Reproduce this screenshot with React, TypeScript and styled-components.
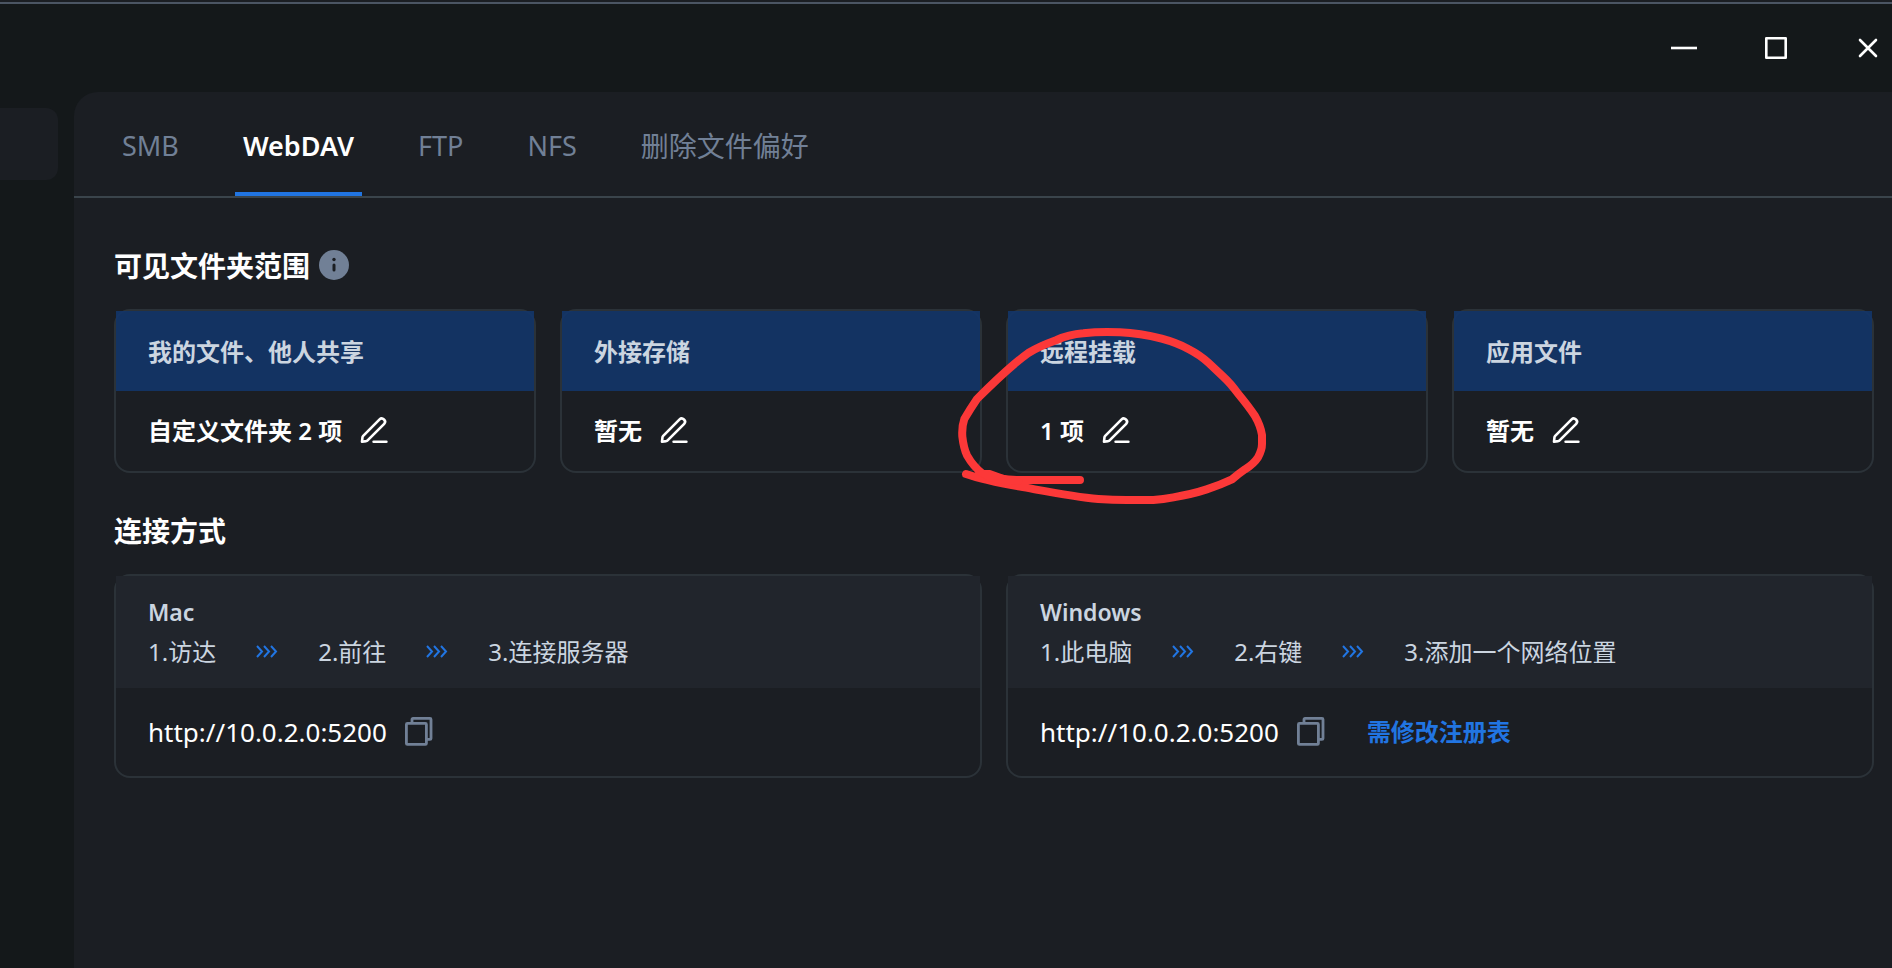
import React from 'react';
import styled, { createGlobalStyle } from 'styled-components';

const GlobalStyle = createGlobalStyle`
  *, *::before, *::after { box-sizing: border-box; }
  html, body, #root { height: 100%; }
  body {
    margin: 0;
    background: #14181a;
    color: #ffffff;
    font-family: "Noto Sans", "Noto Sans CJK SC", sans-serif;
    font-size: 24px;
    line-height: 40px;
  }
  h2, h3, p, ol, ul { margin: 0; padding: 0; list-style: none; }
  button { border: 0; padding: 0; background: none; color: inherit; font: inherit; cursor: pointer; }
  svg { display: block; }
`;

const Window = styled.div`
  display: flex;
  flex-direction: column;
  min-height: 100%;
  border-top: 2px solid #1b1e23;
`;

const TitleBar = styled.header`
  display: flex;
  justify-content: flex-end;
  align-items: center;
  gap: 60px;
  height: 90px;
  padding: 0 8px 0 0;
  border-top: 2px solid #4b5563;
`;

const WindowButton = styled.button`
  width: 32px;
  height: 32px;
`;

const Body = styled.div`
  display: flex;
  flex: 1;
`;

const Sidebar = styled.nav`
  flex: none;
  width: 74px;
  padding: 16px 16px 0 0;
`;

const SidebarItem = styled.div`
  height: 72px;
  border-radius: 0 12px 12px 0;
  background: #1b1e23;
`;

const Panel = styled.main`
  flex: 1;
  min-width: 0;
  border-top-left-radius: 24px;
  background: #1b1e23;
`;

const Tabs = styled.div`
  display: flex;
  gap: 48px;
  height: 106px;
  padding-left: 40px;
  border-bottom: 2px solid #3a444b;
`;

const Tab = styled.button<{ $active?: boolean; $latin?: boolean }>`
  padding: 8px 8px 0;
  border-bottom: 4px solid ${(p) => (p.$active ? '#2175e2' : 'transparent')};
  color: ${(p) => (p.$active ? '#ffffff' : '#718096')};
  font-size: ${(p) => (p.$latin ? 27 : 28)}px;
  font-weight: ${(p) => (p.$active ? 600 : 400)};
  white-space: nowrap;
`;

const Content = styled.div`
  padding: 48px 18px 40px 40px;
`;

const Section = styled.section`
  margin-bottom: 38px;
`;

const SectionTitle = styled.h2`
  display: flex;
  align-items: center;
  gap: 8px;
  margin-bottom: 23px;
  font-size: 28px;
  font-weight: 700;
`;

const CardGrid = styled.div<{ $columns: number }>`
  display: grid;
  grid-template-columns: repeat(${(p) => p.$columns}, minmax(0, 1fr));
  gap: 24px;
`;

const Card = styled.article`
  position: relative;
  border: 2px solid #2b3238;
  border-radius: 16px;
`;

const ScopeHeader = styled.h3`
  padding: 21px 32px 19px;
  background: rgba(19, 53, 105, 0.9);
  color: #cbd5e0;
  font-size: 24px;
  font-weight: 700;
`;

const ScopeBody = styled.div`
  display: flex;
  align-items: center;
  gap: 16px;
  padding: 20px 32px;
  font-weight: 600;
`;

const GuideHeader = styled.div`
  padding: 16px 32px;
  background: #21252c;
  color: #cbd5e0;
`;

const GuideTitle = styled.h3`
  font-size: 23px;
  font-weight: 600;
`;

const Steps = styled.ol`
  display: flex;
  align-items: center;
  gap: 39px;
`;

const Step = styled.li`
  display: flex;
  align-items: center;
  gap: 39px;
  white-space: nowrap;
`;

const GuideBody = styled.div`
  display: flex;
  align-items: center;
  gap: 16px;
  padding: 24px 32px;
`;

const Address = styled.span`
  font-size: 26px;
`;

const IconButton = styled.button`
  flex: none;
  width: 32px;
  height: 32px;
`;

const RegistryLink = styled.a`
  margin-left: 24px;
  color: #2175e2;
  font-weight: 700;
  text-decoration: none;
`;

const Marker = styled.svg`
  position: absolute;
  z-index: 1;
  top: -21px;
  left: -68px;
  width: 480px;
  height: 230px;
  pointer-events: none;
`;

const EditIcon = () => (
  <svg width="32" height="32" viewBox="0 0 32 32" fill="none" stroke="#fff" strokeWidth="2.6" strokeLinecap="round" strokeLinejoin="round">
    <path d="M4 26.7L4.5 22.2Q4.6 21.4 5.2 20.8L21.6 4.4C24.4 1.6 28.9 6 26.2 8.8L9.6 25.3Q9 25.9 8.2 26.1Z" />
    <path d="M15.6 26.8H28.4" />
  </svg>
);

const CopyIcon = () => (
  <svg width="32" height="32" viewBox="0 0 32 32" fill="none" stroke="#718096" strokeWidth="2.8" strokeLinejoin="round">
    <rect x="3.4" y="7.4" width="20" height="21" rx="1" />
    <path d="M9 7V3.4Q9 2.4 10 2.4H27Q28 2.4 28 3.4V22.4Q28 23.4 27 23.4H24" />
  </svg>
);

const InfoIcon = () => (
  <svg width="32" height="32" viewBox="0 0 32 32" role="img" aria-label="info">
    <circle cx="16" cy="15" r="15" fill="#718096" />
    <circle cx="16" cy="9.5" r="1.7" fill="#1b1e23" />
    <path d="M16 15V20" stroke="#1b1e23" strokeWidth="3" strokeLinecap="round" />
  </svg>
);

const Chevrons = () => (
  <svg width="24" height="16" viewBox="0 0 24 16" fill="none" stroke="#2175e2" strokeWidth="2" aria-hidden="true">
    <path d="M2 2L7 7.5L2 13M9 2L14 7.5L9 13M16 2L21 7.5L16 13" />
  </svg>
);

const HandCircle = () => (
  <Marker viewBox="0 0 1440 690" fill="none" stroke="#fc3838" strokeWidth="24" strokeLinecap="round" strokeLinejoin="round" aria-hidden="true">
    <path d="M78 552C110 563 150 574 240 590S400 620 475 627Q530 631 580 630H640Q670 628 700 622C740 615 770 608 800 598Q840 585 876 568Q895 552 915 538Q942 521 954 502Q966 480 966 462V435Q962 408 945 378Q925 348 895 312Q872 280 850 260L805 218Q780 195 745 177Q710 158 665 146Q600 129 540 127Q480 124 430 130Q385 134 350 150Q295 170 265 189C230 214 160 278 111 327Q90 358 73 387Q65 410 67 440Q71 475 81 496Q100 530 130 553Q180 570 230 570H420" />
    <path d="M118 548L150 548L200 566L240 575L200 577L150 566Z" fill="#fc3838" strokeWidth="16" />
  </Marker>
);

const tabs = [
  { name: 'SMB', latin: true },
  { name: 'WebDAV', latin: true },
  { name: 'FTP', latin: true },
  { name: 'NFS', latin: true },
  { name: '删除文件偏好', latin: false },
];

const scopes = [
  { title: '我的文件、他人共享', value: '自定义文件夹 2 项' },
  { title: '外接存储', value: '暂无' },
  { title: '远程挂载', value: '1 项', marked: true },
  { title: '应用文件', value: '暂无' },
];

const guides = [
  { system: 'Mac', steps: ['1.访达', '2.前往', '3.连接服务器'] },
  { system: 'Windows', steps: ['1.此电脑', '2.右键', '3.添加一个网络位置'], link: '需修改注册表' },
];

export default function App() {
  return (
    <>
      <GlobalStyle />
      <Window>
        <TitleBar>
          <WindowButton aria-label="最小化">
            <svg width="32" height="32" viewBox="0 0 32 32" stroke="#fff" strokeWidth="2.6">
              <path d="M3 16H29" />
            </svg>
          </WindowButton>
          <WindowButton aria-label="最大化">
            <svg width="32" height="32" viewBox="0 0 32 32" fill="none" stroke="#fff" strokeWidth="2.6" strokeLinejoin="round">
              <rect x="6.3" y="6.3" width="19.4" height="19.4" />
            </svg>
          </WindowButton>
          <WindowButton aria-label="关闭">
            <svg width="32" height="32" viewBox="0 0 32 32" stroke="#fff" strokeWidth="2.6" strokeLinecap="round">
              <path d="M8 8L24 24M24 8L8 24" />
            </svg>
          </WindowButton>
        </TitleBar>
        <Body>
          <Sidebar>
            <SidebarItem />
          </Sidebar>
          <Panel>
            <Tabs role="tablist">
              {tabs.map(({ name, latin }) => (
                <Tab key={name} role="tab" aria-selected={name === 'WebDAV'} $active={name === 'WebDAV'} $latin={latin}>
                  {name}
                </Tab>
              ))}
            </Tabs>
            <Content>
              <Section>
                <SectionTitle>
                  可见文件夹范围
                  <InfoIcon />
                </SectionTitle>
                <CardGrid $columns={4}>
                  {scopes.map((scope) => (
                    <Card key={scope.title}>
                      <ScopeHeader>{scope.title}</ScopeHeader>
                      <ScopeBody>
                        <span>{scope.value}</span>
                        <IconButton aria-label="编辑">
                          <EditIcon />
                        </IconButton>
                      </ScopeBody>
                      {scope.marked && <HandCircle />}
                    </Card>
                  ))}
                </CardGrid>
              </Section>
              <Section>
                <SectionTitle>连接方式</SectionTitle>
                <CardGrid $columns={2}>
                  {guides.map((guide) => (
                    <Card key={guide.system}>
                      <GuideHeader>
                        <GuideTitle>{guide.system}</GuideTitle>
                        <Steps>
                          {guide.steps.map((step, i) => (
                            <Step key={step}>
                              {i > 0 && <Chevrons />}
                              <span>{step}</span>
                            </Step>
                          ))}
                        </Steps>
                      </GuideHeader>
                      <GuideBody>
                        <Address>http://10.0.2.0:5200</Address>
                        <IconButton aria-label="复制">
                          <CopyIcon />
                        </IconButton>
                        {guide.link && <RegistryLink href="#registry">{guide.link}</RegistryLink>}
                      </GuideBody>
                    </Card>
                  ))}
                </CardGrid>
              </Section>
            </Content>
          </Panel>
        </Body>
      </Window>
    </>
  );
}
